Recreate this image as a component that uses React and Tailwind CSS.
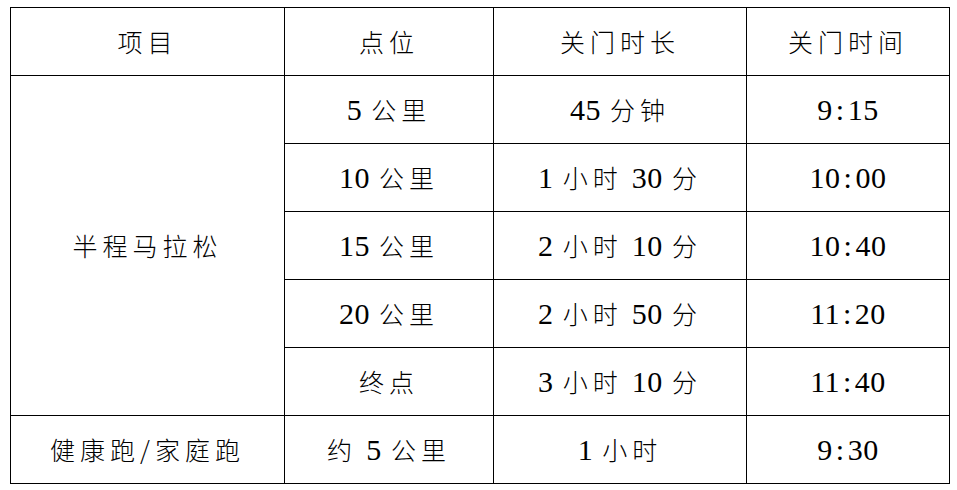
const rows = [
	['5 公里', '45 分钟', '9:15'],
	['10 公里', '1 小时 30 分', '10:00'],
	['15 公里', '2 小时 10 分', '10:40'],
	['20 公里', '2 小时 50 分', '11:20'],
	['终点', '3 小时 10 分', '11:40'],
]

// digits in a serif latin face, CJK in the CJK face
function Txt({ children }) {
	const parts = children.split(/([\d:]+)/)
	return (
		<span className="whitespace-pre">
			{parts.map((p, i) => {
				if (/^[\d:]+$/.test(p)) {
					const [a, b] = p.split(':')
					return (
						<span key={i} className="font-['Liberation_Serif'] text-[30px] tracking-[0.5px]">
							{a}
							{b !== undefined && <span className="mx-[3px]">:</span>}
							{b}
						</span>
					)
				}
				return (
					<span key={i} className="font-['Noto_Sans_CJK_SC'] font-light text-[25px] tracking-[5px]">
						{p.replace(/^ /, '\u2006').replace(/ $/, '\u2006')}
					</span>
				)
			})}
		</span>
	)
}

function Cell({ children, rowSpan }) {
	return (
		<td rowSpan={rowSpan} className="border border-black text-center align-middle p-0 leading-none">
			<Txt>{children}</Txt>
		</td>
	)
}

export default function App() {
	return (
		<div className="w-[957px] h-[490px] bg-white pt-[7px] pl-[10px] text-black">
			<table className="border-collapse table-fixed w-[939px]">
				<colgroup>
					<col className="w-[274px]" />
					<col className="w-[209px]" />
					<col className="w-[253px]" />
					<col className="w-[203px]" />
				</colgroup>
				<tbody>
					<tr className="h-[68px]">
						<Cell>项目</Cell>
						<Cell>点位</Cell>
						<Cell>关门时长</Cell>
						<Cell>关门时间</Cell>
					</tr>
					{rows.map((r, i) => (
						<tr key={i} className="h-[68px]">
							{i === 0 && <Cell rowSpan={5}>半程马拉松</Cell>}
							<Cell>{r[0]}</Cell>
							<Cell>{r[1]}</Cell>
							<Cell>{r[2]}</Cell>
						</tr>
					))}
					<tr className="h-[68px]">
						<Cell>健康跑/家庭跑</Cell>
						<Cell>约 5 公里</Cell>
						<Cell>1 小时</Cell>
						<Cell>9:30</Cell>
					</tr>
				</tbody>
			</table>
		</div>
	)
}
